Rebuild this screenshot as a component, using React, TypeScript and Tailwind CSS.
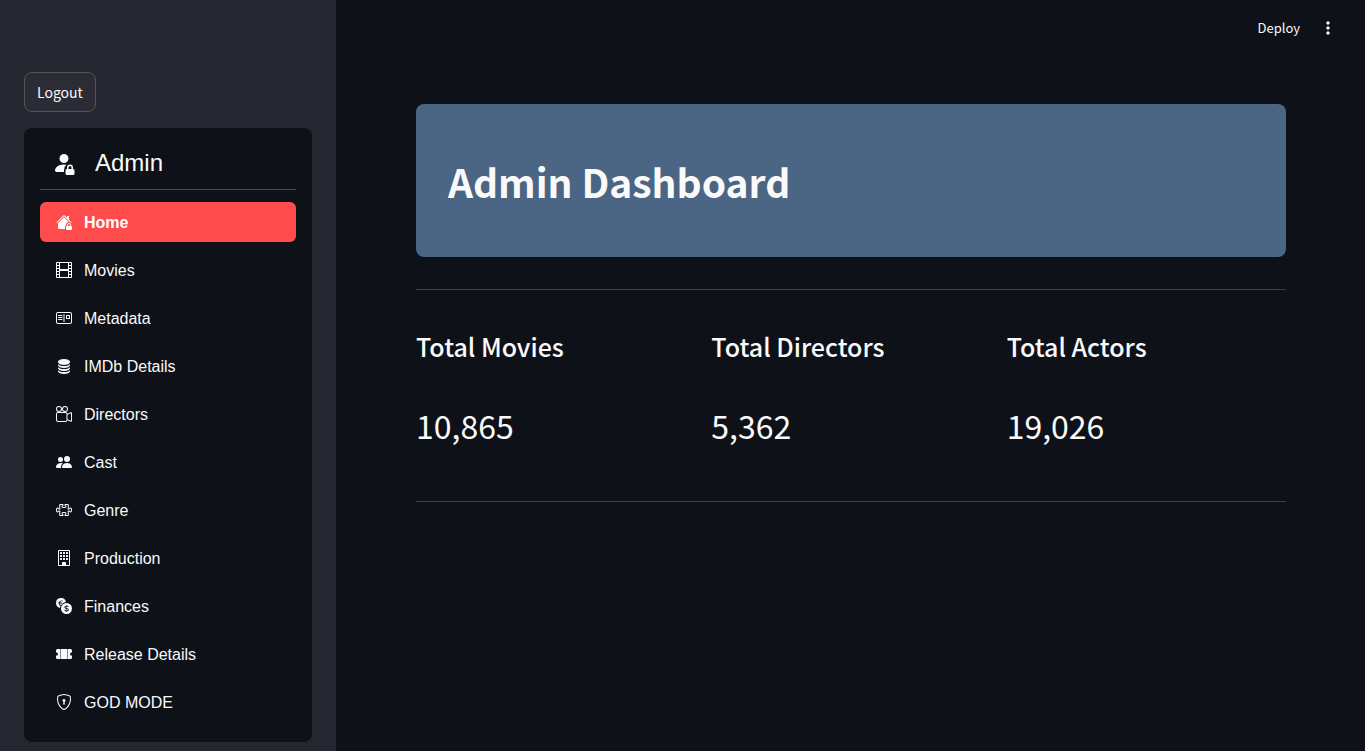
import type { IconType } from "react-icons";
import {
  BsBuilding,
  BsCameraReels,
  BsCurrencyExchange,
  BsDatabaseFill,
  BsFilm,
  BsHouseLockFill,
  BsPeopleFill,
  BsPersonFillLock,
  BsPostcard,
  BsPuzzle,
  BsShieldLock,
  BsTicketPerforatedFill,
} from "react-icons/bs";
import { MdMoreVert } from "react-icons/md";

const navItems: { label: string; Icon: IconType; active?: boolean }[] = [
  { label: "Home", Icon: BsHouseLockFill, active: true },
  { label: "Movies", Icon: BsFilm },
  { label: "Metadata", Icon: BsPostcard },
  { label: "IMDb Details", Icon: BsDatabaseFill },
  { label: "Directors", Icon: BsCameraReels },
  { label: "Cast", Icon: BsPeopleFill },
  { label: "Genre", Icon: BsPuzzle },
  { label: "Production", Icon: BsBuilding },
  { label: "Finances", Icon: BsCurrencyExchange },
  { label: "Release Details", Icon: BsTicketPerforatedFill },
  { label: "GOD MODE", Icon: BsShieldLock },
];

const stats = [
  { label: "Total Movies", value: "10,865" },
  { label: "Total Directors", value: "5,362" },
  { label: "Total Actors", value: "19,026" },
];

function Sidebar() {
  return (
    <aside className="w-[336px] shrink-0 overflow-hidden bg-[#262730] px-6 pt-[72px]">
      <button
        type="button"
        className="flex h-10 items-center rounded-lg border border-[#53545b] bg-[#2b2c36] px-3 text-sm"
      >
        Logout
      </button>
      <div className="mt-4 rounded-lg bg-[#0e1117] p-4 font-['Liberation_Sans',sans-serif]">
        <div className="flex h-[46px] items-center gap-[19px] border-b border-[#4b4c50] pb-[7px] pl-3">
          <BsPersonFillLock size={24} aria-hidden="true" />
          <h2 className="text-2xl">Admin</h2>
        </div>
        <nav className="mt-3 flex flex-col gap-2 pb-1">
          {navItems.map(({ label, Icon, active }) => (
            <a
              key={label}
              href="#"
              aria-current={active ? "page" : undefined}
              className={
                active
                  ? "flex h-10 items-center gap-3 rounded-md bg-[#ff4b4b] px-4 text-base font-bold text-white"
                  : "flex h-10 items-center gap-3 rounded-md px-4 text-base"
              }
            >
              <Icon size={16} aria-hidden="true" />
              <span className="pt-0.5">{label}</span>
            </a>
          ))}
        </nav>
      </div>
    </aside>
  );
}

export default function App() {
  return (
    <div className="flex h-screen overflow-hidden bg-[#0e1117] font-['Noto_Sans_CJK_SC',sans-serif] text-[#fafafa]">
      <Sidebar />
      <div className="min-w-0 flex-1">
        <header className="flex h-14 items-center justify-end gap-[18px] pr-[27px]">
          <button type="button" className="text-[13px]">
            Deploy
          </button>
          <button type="button" aria-label="Main menu">
            <MdMoreVert size={20} aria-hidden="true" />
          </button>
        </header>
        <main className="pt-12 pr-[79px] pl-20">
          <div className="rounded-lg bg-[#4b6584] px-8 pt-[49px] pb-[47px]">
            <h1 className="text-[39px] leading-[57px] font-bold">Admin Dashboard</h1>
          </div>
          <hr className="mt-8 border-[#3e4044]" />
          <section className="mt-[38px] grid grid-cols-3 gap-4">
            {stats.map(({ label, value }) => (
              <div key={label}>
                <h3 className="text-[25px] leading-9 font-medium">{label}</h3>
                <p className="mt-9 text-[32px] leading-[50px]">{value}</p>
              </div>
            ))}
          </section>
          <hr className="mt-[51px] border-[#3e4044]" />
        </main>
      </div>
    </div>
  );
}
